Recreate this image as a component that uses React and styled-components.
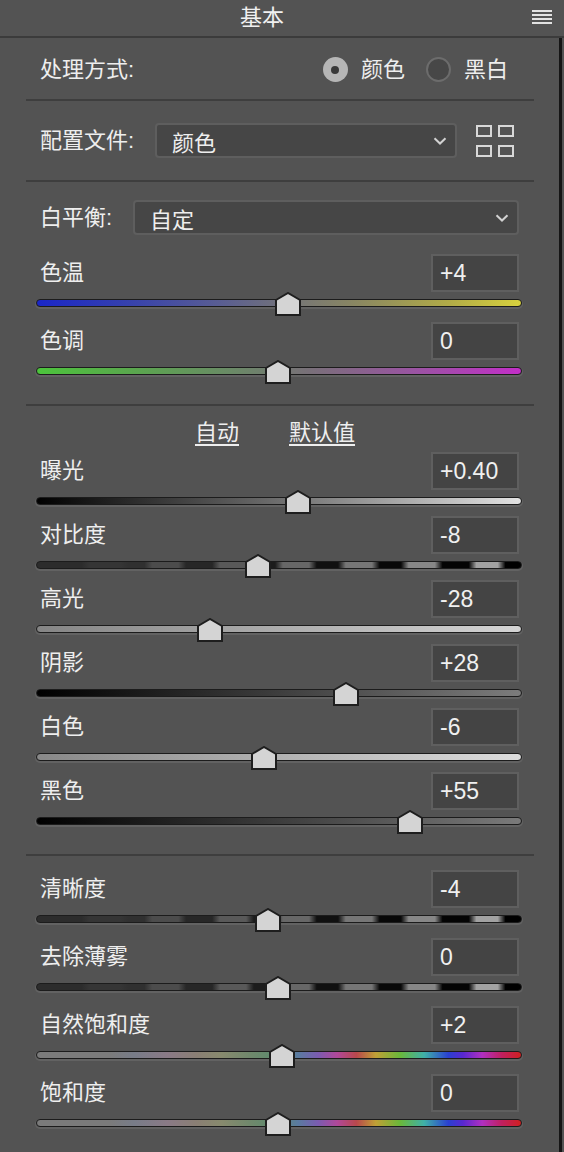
import styled, { createGlobalStyle } from "styled-components";

const GlobalStyle = createGlobalStyle`
  html, body {
    margin: 0;
    padding: 0;
    background: #535353;
  }
  body {
    font-family: "Liberation Sans", "Noto Sans CJK SC", sans-serif;
    color: #ededed;
  }
`;

// stripe pattern used by contrast / clarity / dehaze
const stripe = () => {
  const segs = [
    [0, 10, "#2c2c2c"],
    [10, 18, "#353535"],
    [18, 23, "#303030"],
    [23, 30, "#4c4c4c"],
    [30, 37, "#272727"],
    [37, 44, "#595959"],
    [44, 50, "#1c1c1c"],
    [50, 57, "#676767"],
    [57, 63, "#101010"],
    [63, 70, "#767676"],
    [70, 76, "#080808"],
    [76, 83, "#878787"],
    [83, 90, "#040404"],
    [90, 96, "#a2a2a2"],
    [96, 100, "#000000"],
  ];
  const stops = segs
    .map(([a, b, c]) => `${c} ${a + 0.8}%, ${c} ${b - 0.8}%`)
    .join(", ");
  return `linear-gradient(to right, ${stops})`;
};

const tracks = {
  temp: "linear-gradient(to right, #1a26c8 0%, #3540ae 18%, #5a5e92 38%, #747478 52%, #8a8762 66%, #b1ab48 85%, #d8d23e 100%)",
  tint: "linear-gradient(to right, #4cc43c 0%, #5aa64e 20%, #6a8a66 40%, #787078 56%, #9a54a2 78%, #c22ec8 100%)",
  exposure: "linear-gradient(to right, #000 0%, #6e6e6e 50%, #e2e2e2 100%)",
  contrast: stripe(),
  highlights: "linear-gradient(to right, #858585 0%, #d4d4d4 100%)",
  shadows: "linear-gradient(to right, #000 0%, #7c7c7c 100%)",
  whites: "linear-gradient(to right, #888888 0%, #dcdcdc 100%)",
  blacks: "linear-gradient(to right, #000 0%, #7a7a7a 100%)",
  sat: "linear-gradient(to right, #7b7b7b 0%, #7b7b7b 15%, #787c88 20%, #8a7a86 27%, #8a7f74 33%, #888a6e 38%, #70886c 44%, #5e8a6e 49%, #5a7aa0 54%, #7a5cb0 58%, #b0489a 62%, #b8484c 66%, #c0a036 70%, #6ab83a 75%, #3fb0a8 80%, #2a40d0 85%, #5828d0 88%, #b030c0 92%, #c02060 96%, #d02020 100%)",
};

const Panel = styled.div`
  width: 564px;
  height: 1152px;
  background: #535353;
  overflow: hidden;
`;

const Header = styled.div`
  height: 36px;
  display: flex;
  align-items: center;
  border-bottom: 2px solid #3b3b3b;
`;

const Title = styled.div`
  flex: 1;
  text-align: center;
  font-size: 22px;
  line-height: 36px;
  color: #f0f0f0;
`;

const MenuBars = styled.div`
  width: 20px;
  margin: 0 12px 2px 8px;
  display: flex;
  flex-direction: column;
  gap: 2px;
  span {
    display: block;
    height: 2px;
    background: #e2e2e2;
  }
`;

const Body = styled.div`
  width: 562px;
  height: 1114px;
  box-sizing: border-box;
  border-right: 3px solid #151515;
`;

const Section = styled.div`
  margin: 0 25px 0 26px;
  height: ${(p) => (p.h ? `${p.h}px` : "auto")};
  padding-top: ${(p) => p.pt || 0}px;
  box-sizing: border-box;
  border-bottom: ${(p) => (p.last ? "none" : "2px solid #3e3e3e")};
  display: flex;
  flex-direction: column;
  justify-content: ${(p) => (p.center ? "center" : "flex-start")};
`;

const Line = styled.div`
  display: flex;
  align-items: center;
  padding: 0 ${(p) => p.pr || 0}px 0 14px;
  margin-bottom: ${(p) => p.mb || 0}px;
`;

const Label = styled.div`
  font-size: 22px;
  line-height: 26px;
  color: #eeeeee;
  width: ${(p) => (p.w ? `${p.w}px` : "auto")};
  flex-shrink: 0;
  white-space: nowrap;
`;

const RadioGroup = styled.div`
  margin-left: auto;
  display: flex;
  align-items: center;
`;

const Radio = styled.span`
  width: 25px;
  height: 25px;
  border-radius: 50%;
  box-sizing: border-box;
  background: ${(p) => (p.on ? "#b6b6b6" : "#474747")};
  border: ${(p) => (p.on ? "none" : "2px solid #6c6c6c")};
  display: flex;
  align-items: center;
  justify-content: center;
  margin: 0 13px 0 ${(p) => (p.first ? 0 : 21)}px;
  &::after {
    content: "";
    width: 8px;
    height: 8px;
    border-radius: 50%;
    background: #3a3a3a;
    display: ${(p) => (p.on ? "block" : "none")};
  }
`;

const Select = styled.div`
  flex: 1;
  height: 35px;
  box-sizing: border-box;
  border: 2px solid #5e5e5e;
  border-radius: 4px;
  background: #464646;
  display: flex;
  align-items: center;
  padding: 0 8px 0 15px;
  font-size: 22px;
  color: #eeeeee;
  span {
    flex: 1;
  }
`;

const GridIcon = styled.div`
  margin-left: 19px;
  display: grid;
  grid-template-columns: 16px 16px;
  grid-template-rows: 12px 12px;
  column-gap: 6px;
  row-gap: 8px;
  span {
    border: 2px solid #d8d8d8;
  }
`;

const Links = styled.div`
  display: flex;
  justify-content: center;
  gap: 50px;
  padding-right: 10px;
  margin-bottom: 6px;
`;

const LinkText = styled.span`
  font-size: 22px;
  line-height: 26px;
  color: #eeeeee;
  text-decoration: underline;
  text-decoration-thickness: 2px;
  text-underline-offset: 4px;
`;

const Row = styled.div`
  display: flex;
  flex-direction: column;
  margin-bottom: ${(p) => p.gap}px;
`;

const RowHead = styled.div`
  height: 38px;
  display: flex;
  align-items: center;
  justify-content: space-between;
  padding: 0 15px 0 14px;
  margin-bottom: 7px;
`;

const ValueBox = styled.div`
  width: 88px;
  height: 38px;
  box-sizing: border-box;
  border: 2px solid #5f5f5f;
  background: #444444;
  font-size: 23px;
  line-height: 34px;
  padding-left: 7px;
  color: #f0f0f0;
`;

const TrackWrap = styled.div`
  position: relative;
  margin: 0 12px 0 10px;
  height: 8px;
`;

const Track = styled.div`
  height: 8px;
  box-sizing: border-box;
  border: 1.5px solid #1c1c1c;
  border-radius: 4px;
  background: ${(p) => tracks[p.kind]};
  box-shadow: 0 1px 0 1px rgba(255, 255, 255, 0.09);
`;

const Thumb = styled.svg`
  position: absolute;
  top: -7px;
  width: 26px;
  height: 24px;
  margin-left: -13px;
`;

const Chevron = () => (
  <svg width="14" height="8" viewBox="0 0 14 8">
    <path d="M1.5 1.2 L7 6.5 L12.5 1.2" fill="none" stroke="#d2d2d2" strokeWidth="2" />
  </svg>
);

const Slider = ({ label, value, x, kind, gap }) => {
  const pct = ((x - 36) / 486) * 100;
  return (
    <Row gap={gap}>
      <RowHead>
        <Label>{label}</Label>
        <ValueBox>{value}</ValueBox>
      </RowHead>
      <TrackWrap>
        <Track kind={kind} />
        <Thumb viewBox="0 0 26 24" style={{ left: `${pct}%` }}>
          <path d="M1 8 L13 1 L25 8 L25 23 L1 23 Z" fill="#d4d4d4" stroke="#1e1e1e" strokeWidth="2" strokeLinejoin="miter" />
        </Thumb>
      </TrackWrap>
    </Row>
  );
};

const colorRows = [
  { label: "色温", value: "+4", x: 288, kind: "temp" },
  { label: "色调", value: "0", x: 278, kind: "tint" },
];

const toneRows = [
  { label: "曝光", value: "+0.40", x: 298, kind: "exposure" },
  { label: "对比度", value: "-8", x: 258, kind: "contrast" },
  { label: "高光", value: "-28", x: 210, kind: "highlights" },
  { label: "阴影", value: "+28", x: 346, kind: "shadows" },
  { label: "白色", value: "-6", x: 264, kind: "whites" },
  { label: "黑色", value: "+55", x: 410, kind: "blacks" },
];

const presenceRows = [
  { label: "清晰度", value: "-4", x: 268, kind: "contrast" },
  { label: "去除薄雾", value: "0", x: 278, kind: "contrast" },
  { label: "自然饱和度", value: "+2", x: 282, kind: "sat" },
  { label: "饱和度", value: "0", x: 278, kind: "sat" },
];

export default function App() {
  return (
    <>
      <GlobalStyle />
      <Panel>
        <Header>
          <Title>基本</Title>
          <MenuBars>
            <span />
            <span />
            <span />
            <span />
          </MenuBars>
        </Header>
        <Body>
          <Section h={63} center pt={2}>
            <Line pr={26}>
              <Label>处理方式:</Label>
              <RadioGroup>
                <Radio on first />
                <Label>颜色</Label>
                <Radio />
                <Label>黑白</Label>
              </RadioGroup>
            </Line>
          </Section>

          <Section h={81} center>
            <Line pr={20}>
              <Label w={115}>配置文件:</Label>
              <Select>
                <span>颜色</span>
                <Chevron />
              </Select>
              <GridIcon>
                <span />
                <span />
                <span />
                <span />
              </GridIcon>
            </Line>
          </Section>

          <Section h={224} pt={18}>
            <Line pr={15} mb={19}>
              <Label w={93}>白平衡:</Label>
              <Select>
                <span>自定</span>
                <Chevron />
              </Select>
            </Line>
            {colorRows.map((r) => (
              <Slider key={r.label} {...r} gap={15} />
            ))}
          </Section>

          <Section h={450} pt={14}>
            <Links>
              <LinkText>自动</LinkText>
              <LinkText>默认值</LinkText>
            </Links>
            {toneRows.map((r) => (
              <Slider key={r.label} {...r} gap={11} />
            ))}
          </Section>

          <Section last pt={14}>
            {presenceRows.map((r) => (
              <Slider key={r.label} {...r} gap={15} />
            ))}
          </Section>
        </Body>
      </Panel>
    </>
  );
}
